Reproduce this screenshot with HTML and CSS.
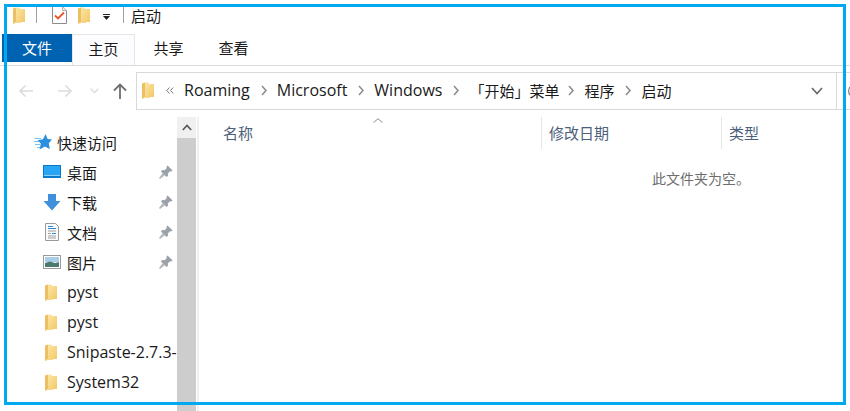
FILE: index.html
```html
<!DOCTYPE html>
<html lang="zh-CN">

<head>
    <meta charset="UTF-8">
    <meta name="viewport" content="width=device-width, initial-scale=1.0">
    <title>启动</title>
    <link rel="stylesheet" href="styles.css">
</head>

<body>
    <svg class="defs" width="0" height="0" aria-hidden="true">
        <defs>
            <linearGradient id="folder-fill" x1="0" y1="0" x2="1" y2="1">
                <stop offset="0" stop-color="#fbe6a2"/>
                <stop offset="1" stop-color="#f3c869"/>
            </linearGradient>
            <symbol id="folder" viewBox="0 0 12 17">
                <path d="M0 1.5 L3 0.5 L3 15 L0 17 Z" fill="#ecbf62"/>
                <path d="M3 0.5 H6 L7 2 H12 V15 H3 Z" fill="url(#folder-fill)"/>
                <path d="M0.5 17 L3 15 H8 V16 H3 Z" fill="#f6d98c"/>
            </symbol>
            <symbol id="pin" viewBox="0 0 14 14">
                <path d="M8.6 0.4 L13.6 5.4 L12.2 6.6 L11 6.2 L8.8 8.6 L9 10.8 L7.6 12 L2 6.4 L3.2 5 L5.6 5.2 L7.8 3 L7.4 1.8 Z" fill="#9ba1a8"/>
                <path d="M4 7.8 L6.2 10 L1 14 L0 13 Z" fill="#b4b8bc"/>
            </symbol>
        </defs>
    </svg>

    <!-- 标题栏 -->
    <div class="titlebar">
        <svg class="folder-icon qat-first"><use href="#folder"/></svg>
        <span class="qat-sep"></span>
        <svg class="qat-check" viewBox="0 0 15 18" width="15" height="18">
            <path d="M0.5 0.5 H10.5 L14.5 4.5 V17.5 H0.5 Z" fill="#fff" stroke="#8c8c8c"/>
            <path d="M10.5 0.5 V4.5 H14.5" fill="#eee" stroke="#b0b0b0"/>
            <path d="M3 9.5 L6 12.5 L12 6.5" fill="none" stroke="#e8562a" stroke-width="1.8"/>
        </svg>
        <svg class="folder-icon qat-folder"><use href="#folder"/></svg>
        <svg class="qat-drop" viewBox="0 0 7 6" width="7" height="6">
            <path d="M0 0 H7 V1 H0 Z M0 2 H7 L3.5 6 Z" fill="#222"/>
        </svg>
        <span class="qat-sep qat-sep-last"></span>
        <span class="window-title">启动</span>
    </div>

    <!-- 选项卡 -->
    <div class="tabs">
        <div class="tab tab-file">文件</div>
        <div class="tab tab-active">主页</div>
        <div class="tab">共享</div>
        <div class="tab">查看</div>
    </div>

    <!-- 地址栏 -->
    <div class="navbar">
        <svg class="nav-btn nav-back" viewBox="0 0 16 14" width="16" height="14">
            <path d="M15 7 H2 M7.5 1.5 L2 7 L7.5 12.5" fill="none" stroke="#dcdcdc" stroke-width="1.6"/>
        </svg>
        <svg class="nav-btn nav-forward" viewBox="0 0 16 14" width="16" height="14">
            <path d="M1 7 H14 M8.5 1.5 L14 7 L8.5 12.5" fill="none" stroke="#dcdcdc" stroke-width="1.6"/>
        </svg>
        <svg class="nav-btn nav-recent" viewBox="0 0 9 6" width="9" height="6">
            <path d="M0.7 0.7 L4.5 4.5 L8.3 0.7" fill="none" stroke="#dcdcdc" stroke-width="1.3"/>
        </svg>
        <svg class="nav-btn nav-up" viewBox="0 0 14 16" width="14" height="16">
            <path d="M7 16 V2 M1 7.5 L7 1.5 L13 7.5" fill="none" stroke="#6e6e6e" stroke-width="1.8"/>
        </svg>
        <div class="address">
            <svg class="folder-icon address-folder"><use href="#folder"/></svg>
            <svg class="more" viewBox="0 0 8 7" width="8" height="7">
                <path d="M3.5 0.5 L0.8 3.5 L3.5 6.5 M7.2 0.5 L4.5 3.5 L7.2 6.5" fill="none" stroke="#777" stroke-width="1"/>
            </svg>
            <span class="crumb crumb-latin crumb-first">Roaming</span>
            <svg class="chevron"><path d="M1 1 L5 5.5 L1 10" fill="none" stroke="#8a8a8a" stroke-width="1.5"/></svg>
            <span class="crumb crumb-latin">Microsoft</span>
            <svg class="chevron"><path d="M1 1 L5 5.5 L1 10" fill="none" stroke="#8a8a8a" stroke-width="1.5"/></svg>
            <span class="crumb crumb-latin">Windows</span>
            <svg class="chevron"><path d="M1 1 L5 5.5 L1 10" fill="none" stroke="#8a8a8a" stroke-width="1.5"/></svg>
            <span class="crumb crumb-menu">「开始」菜单</span>
            <svg class="chevron"><path d="M1 1 L5 5.5 L1 10" fill="none" stroke="#8a8a8a" stroke-width="1.5"/></svg>
            <span class="crumb">程序</span>
            <svg class="chevron"><path d="M1 1 L5 5.5 L1 10" fill="none" stroke="#8a8a8a" stroke-width="1.5"/></svg>
            <span class="crumb">启动</span>
            <svg class="address-drop" viewBox="0 0 12 8" width="12" height="8">
                <path d="M1 1 L6 6.5 L11 1" fill="none" stroke="#666" stroke-width="1.6"/>
            </svg>
        </div>
        <div class="search">
            <svg class="refresh" viewBox="0 0 12 14" width="12" height="14">
                <path d="M10 1.5 A6 6 0 1 0 10 12.5" fill="none" stroke="#777" stroke-width="1.2"/>
            </svg>
        </div>
    </div>

    <div class="content">
        <!-- 导航窗格 -->
        <div class="sidebar">
            <div class="tree">
                <div class="tree-row tree-quick">
                    <svg class="tree-icon" viewBox="0 0 18 16" width="18" height="16">
                        <path d="M11.5 0 L13.6 5 L18 5.6 L14.8 9.2 L15.8 15 L10.8 12.4 L5.6 15.6 L6.8 9.6 L3.6 6.2 L9 5.2 Z" fill="#2b8fe0"/>
                        <path d="M0.5 4.5 H7 M0 7.5 H5 M1 10.5 H6 M3 13.5 H6" stroke="#7cc0f0" stroke-width="1"/>
                    </svg>
                    <span>快速访问</span>
                </div>
                <div class="tree-row">
                    <svg class="tree-icon" viewBox="0 0 18 14" width="18" height="14">
                        <rect width="18" height="13" fill="#0a79c9"/>
                        <rect x="1" y="1" width="16" height="10" fill="#29a5f5"/>
                        <path d="M1 10 H17 V11 H1 Z" fill="#8fd3fb"/>
                    </svg>
                    <span>桌面</span>
                    <svg class="pin"><use href="#pin"/></svg>
                </div>
                <div class="tree-row">
                    <svg class="tree-icon" viewBox="0 0 18 17" width="18" height="17">
                        <path d="M5 0 H13 V7 H17.5 L9 16.5 L0.5 7 H5 Z" fill="#3f8fdc"/>
                    </svg>
                    <span>下载</span>
                    <svg class="pin"><use href="#pin"/></svg>
                </div>
                <div class="tree-row">
                    <svg class="tree-icon" viewBox="0 0 18 18" width="18" height="18">
                        <path d="M2.5 0.5 H12.5 L15.5 3.5 V17.5 H2.5 Z" fill="#fafafa" stroke="#9a9a9a"/>
                        <path d="M5 3.5 H10 M5 5.5 H13 M9 10.5 H13" stroke="#2f8ad6"/>
                        <path d="M5 8 H13 M5 10.5 H8 M5 13 H13 M5 15 H13" stroke="#a0a0a0"/>
                    </svg>
                    <span>文档</span>
                    <svg class="pin"><use href="#pin"/></svg>
                </div>
                <div class="tree-row">
                    <svg class="tree-icon" viewBox="0 0 18 14" width="18" height="14">
                        <rect x="0.5" y="0.5" width="17" height="13" fill="#fff" stroke="#9a9a9a"/>
                        <rect x="2" y="2" width="14" height="5" fill="#a9cfe8"/>
                        <path d="M2 8 L7 6.5 L12 8 L16 7 V12 H2 Z" fill="#4a7a72"/>
                    </svg>
                    <span>图片</span>
                    <svg class="pin"><use href="#pin"/></svg>
                </div>
                <div class="tree-row">
                    <svg class="folder-icon tree-folder"><use href="#folder"/></svg>
                    <span class="tree-latin">pyst</span>
                </div>
                <div class="tree-row">
                    <svg class="folder-icon tree-folder"><use href="#folder"/></svg>
                    <span class="tree-latin">pyst</span>
                </div>
                <div class="tree-row">
                    <svg class="folder-icon tree-folder"><use href="#folder"/></svg>
                    <span class="tree-latin">Snipaste-2.7.3-</span>
                </div>
                <div class="tree-row">
                    <svg class="folder-icon tree-folder"><use href="#folder"/></svg>
                    <span class="tree-latin">System32</span>
                </div>
            </div>
            <div class="scrollbar">
                <div class="scroll-up">
                    <svg viewBox="0 0 10 7" width="10" height="7">
                        <path d="M0.8 6 L5 1.5 L9.2 6" fill="none" stroke="#555" stroke-width="1.6"/>
                    </svg>
                </div>
                <div class="scroll-thumb"></div>
            </div>
        </div>

        <!-- 文件列表 -->
        <div class="files">
            <div class="columns">
                <div class="column column-name">
                    名称
                    <svg class="sort-arrow" viewBox="0 0 10 5" width="10" height="5">
                        <path d="M0.5 4.7 L5 0.7 L9.5 4.7" fill="none" stroke="#8a8a8a"/>
                    </svg>
                </div>
                <div class="column column-date">修改日期</div>
                <div class="column column-type">类型</div>
            </div>
            <div class="empty">此文件夹为空。</div>
        </div>
    </div>

    <!-- 截图标注的蓝框 -->
    <div class="capture-frame"></div>
</body>

</html>
```

FILE: styles.css
```css
/* 全局样式 */
html,
body {
    margin: 0;
    height: 100%;
}

body {
    width: 850px;
    height: 411px;
    overflow: hidden;
    position: relative;
    background-color: #fff;
    color: #1a1a1a;
    font-family: "Open Sans", "Noto Sans CJK SC", sans-serif;
    font-size: 15px;
}

.defs {
    position: absolute;
}

.folder-icon {
    width: 12px;
    height: 17px;
    flex-shrink: 0;
}

/* 标题栏 */
.titlebar {
    height: 30px;
    display: flex;
    align-items: center;
}

.qat-first {
    margin-left: 13px;
}

.qat-sep {
    width: 1px;
    height: 16px;
    margin-left: 11px;
    background-color: #a0a0a0;
}

.qat-check {
    margin-left: 15px;
}

.qat-folder {
    margin-left: 11px;
}

.qat-drop {
    margin-left: 13px;
    margin-top: 3px;
}

.qat-sep-last {
    margin-left: 13px;
}

.window-title {
    margin-left: 7px;
}

/* 选项卡 */
.tabs {
    height: 32px;
    display: flex;
    align-items: flex-start;
    box-sizing: border-box;
    padding-left: 2px;
    margin-top: 4px;
    border-bottom: 1px solid #dadbdc;
}

.tab {
    width: 65px;
    height: 28px;
    line-height: 29px;
    text-align: center;
}

.tab-file {
    width: 70px;
    background-color: #0063b1;
    color: #fff;
}

.tab-active {
    height: 31px;
    width: 63px;
    margin-right: 1px;
    box-sizing: border-box;
    background-color: #fdfdff;
    border-top: 1px solid #e4e6e8;
    border-left: 1px solid #e4e6e8;
    border-right: 1px solid #e4e6e8;
    line-height: 28px;
}

/* 地址栏 */
.navbar {
    height: 38px;
    display: flex;
    align-items: center;
    margin-top: 6px;
}

.nav-btn {
    flex-shrink: 0;
}

.nav-back {
    margin-left: 18px;
}

.nav-forward {
    margin-left: 23px;
}

.nav-recent {
    margin-left: 17px;
}

.nav-up {
    margin-left: 14px;
}

.address {
    width: 701px;
    height: 38px;
    margin-left: 9px;
    flex-shrink: 0;
    box-sizing: border-box;
    display: flex;
    align-items: center;
    padding: 0 0 2px 5px;
    border: 1px solid #d9d9d9;
}

.more {
    margin-left: 12px;
    flex-shrink: 0;
}

.crumb {
    white-space: nowrap;
}

.crumb-latin {
    font-size: 16px;
}

.crumb-first {
    margin-left: 10px;
}

.crumb-menu {
    margin-right: -2px;
}

.chevron {
    width: 6px;
    height: 11px;
    margin: 0 10px 0 11px;
    flex-shrink: 0;
}

.address-drop {
    margin: 2px 13px 0 auto;
    flex-shrink: 0;
}

.search {
    width: 40px;
    height: 38px;
    flex-shrink: 0;
    display: flex;
    align-items: center;
    padding-left: 10px;
    border-top: 1px solid #d9d9d9;
    border-bottom: 1px solid #d9d9d9;
    box-sizing: border-box;
}

/* 内容区 */
.content {
    display: flex;
    margin-top: 7px;
}

/* 导航窗格 */
.sidebar {
    width: 199px;
    height: 294px;
    flex-shrink: 0;
    display: flex;
    box-sizing: border-box;
    border-right: 2px solid #f0f0f0;
}

.tree {
    width: 177px;
    box-sizing: border-box;
    padding-top: 10px;
    flex-shrink: 0;
    overflow: hidden;
}

.tree-row {
    height: 30px;
    display: flex;
    align-items: center;
    padding-left: 43px;
    white-space: nowrap;
}

.tree-row span {
    margin-left: 6px;
}

.tree-quick {
    padding-left: 34px;
}

.tree-quick span {
    margin-left: 5px;
}

.tree-latin {
    font-size: 16px;
}

.tree-icon {
    flex-shrink: 0;
}

.tree-folder {
    margin-left: 2px;
}

.tree-row .tree-folder + span {
    margin-left: 10px;
}

.pin {
    width: 14px;
    height: 14px;
    margin-left: auto;
    margin-right: 4px;
}

/* 滚动条 */
.scrollbar {
    width: 19px;
    flex-shrink: 0;
    display: flex;
    flex-direction: column;
    background-color: #f0f0f0;
}

.scroll-up {
    height: 21px;
    display: flex;
    align-items: center;
    justify-content: center;
}

.scroll-thumb {
    flex: 1;
    background-color: #cdcdcd;
}

/* 文件列表 */
.files {
    flex: 1;
}

.columns {
    height: 32px;
    display: flex;
    color: #4c607a;
}

.column {
    height: 32px;
    line-height: 33px;
    box-sizing: border-box;
    padding-left: 7px;
    position: relative;
}

.column-name {
    width: 343px;
    padding-left: 24px;
    border-right: 1px solid #e5e5e5;
}

.column-date {
    width: 180px;
    border-right: 1px solid #e5e5e5;
}

.column-type {
    width: 80px;
}

.sort-arrow {
    position: absolute;
    left: 174px;
    top: 1px;
}

.empty {
    margin-top: 20px;
    padding-left: 453px;
    color: #6d6d6d;
    font-size: 14px;
    line-height: 20px;
}

/* 蓝色截图框 */
.capture-frame {
    position: absolute;
    left: 4px;
    top: 4px;
    width: 842px;
    height: 401px;
    box-sizing: border-box;
    border: 3px solid #00a8f0;
    pointer-events: none;
}
```
